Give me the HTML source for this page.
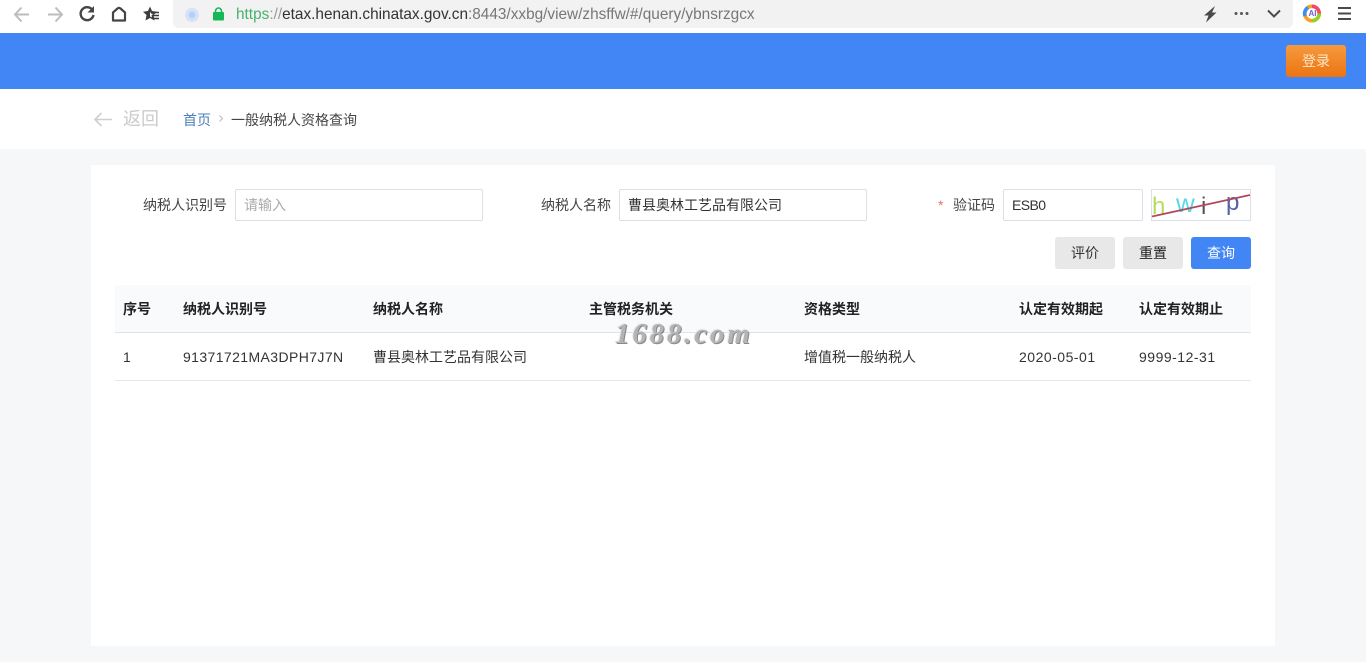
<!DOCTYPE html>
<html lang="zh-CN">
<head>
<meta charset="utf-8">
<title>一般纳税人资格查询</title>
<style>
html,body{margin:0;padding:0;width:1366px;height:662px;overflow:hidden;background:#f5f7f9;}
body{position:relative;font-family:"Liberation Sans","Noto Sans CJK SC",sans-serif;font-size:14px;color:#333;}
.a{position:absolute;white-space:nowrap;}
.t{line-height:20px;height:20px;}
.th{font-weight:700;color:#222;}
.td{color:#333;}
.box{position:absolute;box-sizing:border-box;background:#fff;border:1px solid #dcdfe6;border-radius:2px;height:32px;line-height:30px;padding-left:8px;}
.btn{position:absolute;top:237px;height:32px;width:60px;border-radius:3px;text-align:center;line-height:32px;background:#e8e8e8;color:#333;}
</style>
</head>
<body>
<!-- browser toolbar -->
<div class="a" style="left:0;top:0;width:1366px;height:33px;background:#fff;"></div>
<div class="a" style="left:173px;top:0;width:1120px;height:28px;background:#f2f2f2;border-radius:0 0 6px 6px;"></div>
<svg class="a" style="left:0;top:0;" width="175" height="33" viewBox="0 0 175 33" fill="none">
  <path d="M29 14.500H15M21.500 7.500L15 14.500L21.500 21.500" stroke="#bdbdbd" stroke-width="2"/>
  <path d="M48 14.500H62M55.500 7.500L62 14.500L55.500 21.500" stroke="#bdbdbd" stroke-width="2"/>
  <path d="M92.500 10A6.500 6.500 0 1 0 93.500 15" stroke="#454545" stroke-width="2.400"/>
  <path d="M94 6V12.500H87.500Z" fill="#454545"/>
  <path d="M113 12.500L117.500 8.500Q119 7.300 120.500 8.500L125 12.500V20.500H113Z" stroke="#454545" stroke-width="2.200" stroke-linejoin="round"/>
  <path d="M150 6.500L152 11L157 11.800L153.500 15L154.500 20.500L150 18L145.500 20.500L146.500 15L143 11.800L148 11Z" fill="#3c3c3c"/>
  <path d="M150 11.500L151 13.500L153 14L151.500 15.500L152 17.500L150 16.500Z" fill="#fff"/>
  <path d="M153 12.500H159M153.500 15.500H159M153.500 18.500H159" stroke="#3c3c3c" stroke-width="1.600"/>
</svg>
<svg class="a" style="left:180px;top:3px;" width="50" height="24" viewBox="0 0 50 24">
  <circle cx="12" cy="12" r="7" fill="#d5e2fb"/>
  <circle cx="12" cy="12" r="3.500" fill="#b8cff8"/>
  <rect x="33" y="9" width="11" height="8.500" rx="1" fill="#14b857"/>
  <path d="M35.500 10V8a3 3 0 0 1 6 0v2" stroke="#14b857" stroke-width="1.600" fill="none"/>
</svg>
<div class="a" style="left:236px;top:5px;line-height:20px;font-size:15.360px;color:#777;"><span style="color:#45b36b;">https</span><span style="color:#999;">://</span><span style="color:#333;">etax.henan.chinatax.gov.cn</span>:8443/xxbg/view/zhsffw/#/query/ybnsrzgcx</div>
<svg class="a" style="left:1195px;top:0;" width="171" height="33" viewBox="0 0 171 33" fill="none">
  <path d="M20 6L9 15.500H13.500L11 22.500L21.500 12.500H17Z" fill="#4a4a4a"/>
  <circle cx="41" cy="13.500" r="1.500" fill="#555"/><circle cx="46.500" cy="13.500" r="1.500" fill="#555"/><circle cx="52" cy="13.500" r="1.500" fill="#555"/>
  <path d="M73 10.500L79 16.500L85 10.500" stroke="#4a4a4a" stroke-width="2"/>
  <circle cx="117" cy="13.500" r="7.200" stroke="#f4a020" stroke-width="3.600"/>
  <path d="M117 6.300A7.200 7.200 0 0 1 124.200 13.500" stroke="#ef4a6a" stroke-width="3.600"/>
  <path d="M124.200 13.500A7.200 7.200 0 0 1 117 20.700" stroke="#8fd320" stroke-width="3.600"/>
  <path d="M110 16A7.200 7.200 0 0 1 113 7.500" stroke="#3b8ff0" stroke-width="3.600"/>
  <path d="M143 8H156M143 13.500H156M143 19H156" stroke="#4a4a4a" stroke-width="2"/>
</svg>
<div class="a" style="left:1306px;top:8px;width:13px;text-align:center;font-size:8px;line-height:11px;color:#7a5ad0;font-weight:700;">AI</div>

<!-- blue header -->
<div class="a" style="left:0;top:33px;width:1366px;height:56px;background:#4285f4;"></div>
<div class="a" style="left:1286px;top:45px;width:60px;height:32px;border-radius:3px;background:linear-gradient(#f59a3f,#ed7410);color:#fde6cc;text-align:center;line-height:32px;">登录</div>

<!-- breadcrumb bar -->
<div class="a" style="left:0;top:89px;width:1366px;height:60px;background:#fff;"></div>
<svg class="a" style="left:92px;top:110px;" width="22" height="20" viewBox="0 0 22 20" fill="none">
  <path d="M20 9.500H3M9.500 3L3 9.500L9.500 16" stroke="#cfcfcf" stroke-width="1.600"/>
</svg>
<div class="a" style="left:123px;top:108px;font-size:18px;line-height:23px;color:#cbcbcb;">返回</div>
<div class="a t" style="left:183px;top:110px;color:#4a7fb5;">首页</div>
<svg class="a" style="left:217px;top:113px;" width="8" height="12" viewBox="0 0 8 12" fill="none"><path d="M2.500 2.500L5.500 5.500L2.500 8.500" stroke="#bbb" stroke-width="1"/></svg>
<div class="a t" style="left:231px;top:110px;color:#444;">一般纳税人资格查询</div>

<!-- card -->
<div class="a" style="left:91px;top:165px;width:1184px;height:481px;background:#fff;"></div>

<!-- form -->
<div class="a t" style="left:143px;top:195px;color:#444;">纳税人识别号</div>
<div class="box" style="left:235px;top:189px;width:248px;color:#aaa;">请输入</div>
<div class="a t" style="left:541px;top:195px;color:#444;">纳税人名称</div>
<div class="box" style="left:619px;top:189px;width:248px;color:#333;">曹县奥林工艺品有限公司</div>
<div class="a t" style="left:938px;top:195px;color:#e57373;">*</div>
<div class="a t" style="left:953px;top:195px;color:#444;">验证码</div>
<div class="box" style="left:1003px;top:189px;width:140px;color:#333;letter-spacing:-.6px;">ESB0</div>
<svg class="a" style="left:1151px;top:189px;" width="100" height="32" viewBox="0 0 100 32">
  <rect x=".5" y=".5" width="99" height="31" fill="#fff" stroke="#dcdfe6"/>
  <text x="1" y="25" font-family="Liberation Sans,sans-serif" font-size="24" fill="#b5dc5e">h</text>
  <text x="25" y="23" font-family="Liberation Sans,sans-serif" font-size="26" fill="#5ad8e8">w</text>
  <text x="50" y="25" font-family="Liberation Sans,sans-serif" font-size="24" fill="#555">i</text>
  <text x="75" y="21" font-family="Liberation Sans,sans-serif" font-size="24" fill="#5560a8">p</text>
  <path d="M1 27.500L99 6" stroke="#b04a5a" stroke-width="1.800"/>
</svg>

<div class="btn" style="left:1055px;">评价</div>
<div class="btn" style="left:1123px;color:#222;">重置</div>
<div class="btn" style="left:1191px;background:#4285f4;color:#fff;">查询</div>

<!-- table -->
<div class="a" style="left:115px;top:285px;width:1136px;height:47px;background:#f9fafc;border-bottom:1px solid #dfe2e6;"></div>
<div class="a" style="left:115px;top:380px;width:1136px;height:1px;background:#e4e6ea;"></div>

<div class="a t th" style="left:123px;top:299px;">序号</div>
<div class="a t th" style="left:183px;top:299px;">纳税人识别号</div>
<div class="a t th" style="left:373px;top:299px;">纳税人名称</div>
<div class="a t th" style="left:589px;top:299px;">主管税务机关</div>
<div class="a t th" style="left:804px;top:299px;">资格类型</div>
<div class="a t th" style="left:1019px;top:299px;">认定有效期起</div>
<div class="a t th" style="left:1139px;top:299px;">认定有效期止</div>

<div class="a t td" style="left:123px;top:347px;">1</div>
<div class="a t td" style="left:183px;top:347px;letter-spacing:.4px;">91371721MA3DPH7J7N</div>
<div class="a t td" style="left:373px;top:347px;">曹县奥林工艺品有限公司</div>
<div class="a t td" style="left:804px;top:347px;">增值税一般纳税人</div>
<div class="a t td" style="left:1019px;top:347px;letter-spacing:.5px;">2020-05-01</div>
<div class="a t td" style="left:1139px;top:347px;letter-spacing:.5px;">9999-12-31</div>

<!-- watermark -->
<div class="a" style="left:615px;top:318px;line-height:32px;font-family:'Liberation Serif',serif;font-style:italic;font-weight:700;font-size:29px;letter-spacing:2.800px;color:#b4b4b4;text-shadow:1px 1px 0 #8a8a8a,-1px -1px 0 #ececec;">1688.com</div>
</body>
</html>
